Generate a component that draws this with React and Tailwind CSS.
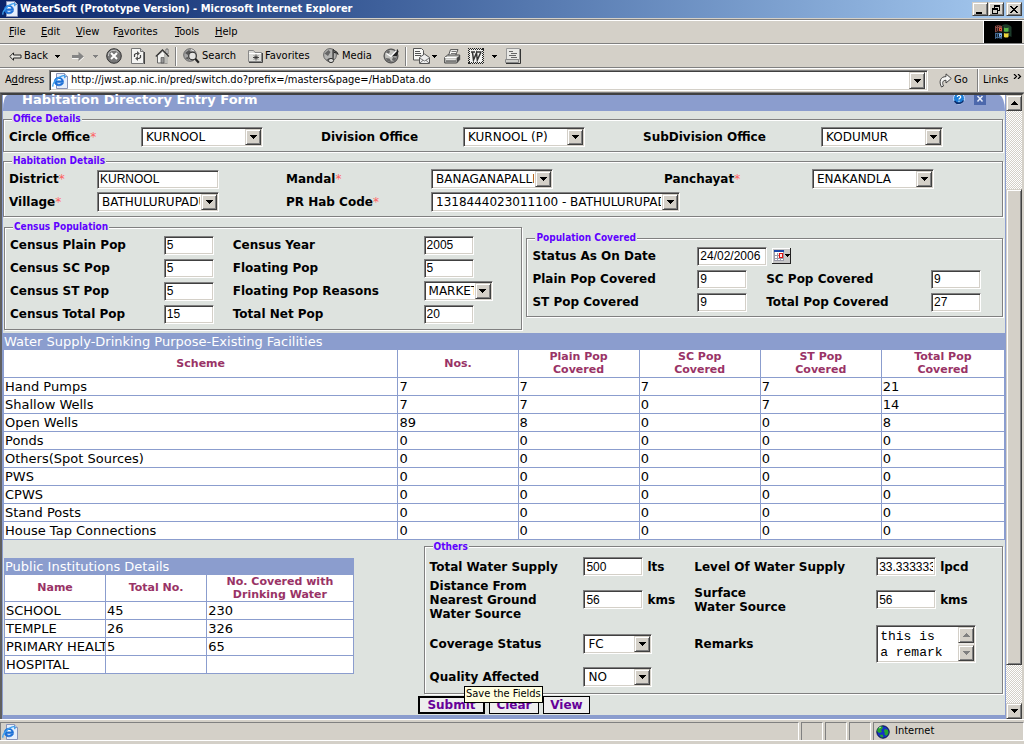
import React from "react";

const SUNKEN =
  "border border-t-[#808080] border-l-[#808080] border-b-white border-r-white shadow-[inset_1px_1px_#404040,inset_-1px_-1px_#d4d0c8] bg-white";
const RAISED =
  "border border-t-[#d4d0c8] border-l-[#d4d0c8] border-b-[#404040] border-r-[#404040] shadow-[inset_1px_1px_#fff,inset_-1px_-1px_#808080] bg-[#d4d0c8]";
const TAHOMA = "font-['DejaVu_Sans_Condensed','DejaVu_Sans',sans-serif]";

function Arrow({ up = false, color = "#000", small = false }) {
  const w = small ? 5 : 7;
  const h = small ? 3 : 4;
  const down = small ? "M0 0h5v1h-1v1h-1v1h-1v-1h-1v-1h-1z" : "M0 0h7v1h-1v1h-1v1h-1v1h-1v-1h-1v-1h-1v-1h-1z";
  return (
    <svg width={w} height={h} viewBox={`0 0 ${w} ${h}`} shapeRendering="crispEdges" aria-hidden="true" className={up ? "rotate-180" : ""}>
      <path d={down} fill={color} />
    </svg>
  );
}

const idOf = (text) => text.toLowerCase().replace(/[^a-z]+/g, "-");

function Label({ text, required = false, lines }) {
  return (
    <label htmlFor={idOf(text)} className="whitespace-nowrap text-xs leading-[14px] font-bold">
      {lines ? lines.map((l) => <span key={l} className="block">{l} </span>) : text}
      {required && <span className="font-normal text-[#ff6060]">*</span>}
    </label>
  );
}

function Text({ name, value, className }) {
  return (
    <input
      id={idOf(name)}
      defaultValue={value}
      className={`h-[19px] pl-[2px] pr-[2px] font-['Liberation_Sans',sans-serif] text-xs outline-none ${SUNKEN} ${className}`}
    />
  );
}

function Select({ name, value, className }) {
  return (
    <div className={`relative h-5 ${className}`}>
      <select
        id={idOf(name)}
        defaultValue={value}
        className={`block h-5 w-full appearance-none pr-[18px] pl-1 text-xs outline-none ${SUNKEN}`}
      >
        <option>{value}</option>
      </select>
      <span className={`pointer-events-none absolute top-[2px] right-[2px] bottom-[2px] flex w-4 items-center justify-center ${RAISED}`}>
        <Arrow />
      </span>
    </div>
  );
}

function Group({ title, className = "", children }) {
  return (
    <fieldset className={`min-w-0 border border-[#808080] px-[5px] pt-px shadow-[1px_1px_#fff,inset_1px_1px_#fff] ${className}`}>
      <legend className={`ml-[3px] bg-[#dee3df] px-[1px] text-[10px] leading-[14px] font-bold text-[#6000ff] ${TAHOMA}`}>{title}</legend>
      {children}
    </fieldset>
  );
}

/* ---------- icons ---------- */

function IEIcon() {
  return (
    <svg width="16" height="16" viewBox="0 0 16 16" aria-hidden="true" className="shrink-0">
      <path d="M4.5.5h8l3 3v12h-11z" fill="#e6eefb" stroke="#8a94b8" />
      <path d="M12.5.5v3h3" fill="#c5d3ea" stroke="#8a94b8" />
      <path d="M11.600 9.400H4.600c.4 2.100 3.600 2.500 4.800.7h2c-1.500 4.200-9.100 3.500-9.100-1.700 0-5.600 9.300-5.700 9.300 1z" fill="#1c6fd6" stroke="#1c6fd6" strokeWidth=".6" />
      <path d="M4.700 7.400h4.700c-.5-1.900-4.200-1.900-4.700 0z" fill="#fff" />
      <path d="M1.300 13.6C-.9 11.5 6.400 3.200 11.500 2.600c1.800-.2 1.900 1 .9 2.600" fill="none" stroke="#3fa0ee" strokeWidth="1.400" />
    </svg>
  );
}

function BackIcon() {
  return (
    <svg width="13" height="9" viewBox="0 0 13 9" aria-hidden="true">
      <path d="M.8 4.500l3.700-3.700v2.200h7.500v3H4.500v2.200z" fill="#e8e6e0" stroke="#222" />
    </svg>
  );
}
function ForwardIcon() {
  return (
    <svg width="14" height="11" viewBox="0 0 14 11" aria-hidden="true">
      <path d="M1 4h6.500V.8l5.300 4.700-5.300 4.700V7H1z" fill="#848484" />
      <path d="M1 7.500h6.500M8 10.500l5-4.500" fill="none" stroke="#fff" strokeWidth=".8" />
    </svg>
  );
}
function StopIcon() {
  return (
    <svg width="16" height="16" viewBox="0 0 16 16" aria-hidden="true">
      <circle cx="8" cy="8" r="7.300" fill="#777" stroke="#333" />
      <path d="M2.500 8a5.500 5.500 0 0 1 10-3.500" fill="none" stroke="#ccc" />
      <path d="M5 5l6 6M11 5l-6 6" stroke="#fff" strokeWidth="2" />
    </svg>
  );
}
function RefreshIcon() {
  return (
    <svg width="14" height="16" viewBox="0 0 14 16" aria-hidden="true">
      <path d="M.5.5h9l3 3v12H.5z" fill="#f4f4f2" stroke="#777" />
      <path d="M9.500.5v3h3" fill="#ccc" stroke="#777" />
      <path d="M3.500 9V6.500L5 5.500h1.500M9.500 7v2.500L8 10.500H6.500" fill="none" stroke="#444" strokeWidth="1.200" />
      <path d="M6 3l2.800 2.500L6 8zM7 8l-2.800 2.500L7 13z" fill="#555" />
      <path d="M13.500 4v12" stroke="#444" />
    </svg>
  );
}
function HomeIcon() {
  return (
    <svg width="16" height="16" viewBox="0 0 16 16" className="shrink-0" aria-hidden="true">
      <path d="M11 1h2v5h-2z" fill="#eee" stroke="#444" strokeWidth=".7" />
      <path d="M2.500 7.500L7.500 3l5 4.500V15h-10z" fill="#f4f4f2" stroke="#666" />
      <path d="M9 4.500l4 4V15H9z" fill="#bdbdb8" />
      <path d="M.8 8.500L7.500 1.800l6.400 6.700" fill="none" stroke="#333" strokeWidth="1.200" />
      <path d="M6 9.500h3V15H6z" fill="#999" stroke="#444" strokeWidth=".6" />
    </svg>
  );
}
function SearchIcon() {
  return (
    <svg width="17" height="16" viewBox="0 0 17 16" aria-hidden="true">
      <circle cx="7" cy="7" r="6.300" fill="#a5a5a5" stroke="#666" />
      <path d="M2 5l4-3 2 2-3 3zM2 10l3-1 1 3" fill="#555" />
      <path d="M8 1.500l3 1.500" stroke="#eee" />
      <circle cx="9.500" cy="8" r="3.800" fill="#e4e4e2" stroke="#333" strokeWidth="1.200" />
      <path d="M12.300 10.800l3.500 4" stroke="#222" strokeWidth="2.200" />
    </svg>
  );
}
function FavoritesIcon() {
  return (
    <svg width="15" height="13" viewBox="0 0 15 13" aria-hidden="true">
      <path d="M.5 11.500V.500h5l1.500 2h6.500v9z" fill="#dededa" stroke="#888" />
      <path d="M1 3.500h12" stroke="#fff" />
      <path d="M14.500 3v9.500H1" fill="none" stroke="#444" />
      <path d="M8 4.500v6M5 7.500h6M6 5.500l4 4M10 5.500l-4 4" stroke="#333" strokeWidth=".9" />
    </svg>
  );
}
function MediaIcon() {
  return (
    <svg width="17" height="16" viewBox="0 0 17 16" aria-hidden="true">
      <circle cx="7" cy="7" r="6.400" fill="#b4b4b2" stroke="#666" />
      <path d="M1.500 5.500l4-3.500 2 2-2.500 4zM3 12l3-2 2 3-3 .5z" fill="#666" />
      <path d="M10 12.500V1.500c1.500 2 5 1.800 5 5 0-1.500-3-2-4-2" fill="#777" stroke="#222" />
      <ellipse cx="8" cy="12.500" rx="2.600" ry="2.100" fill="#d8d8d6" stroke="#333" />
    </svg>
  );
}
function HistoryIcon() {
  return (
    <svg width="17" height="16" viewBox="0 0 17 16" aria-hidden="true">
      <circle cx="8" cy="8" r="7" fill="#888" stroke="#444" />
      <circle cx="7.500" cy="7.500" r="5.500" fill="#c2c2be" />
      <path d="M2.500 10l4 .5 2 3.500-4-1zM10 9l3.500 1-2 3-2.500-1zM3 4l3-2 1 2-2 2z" fill="#666" />
      <path d="M8 8.500L14.500 1l1 2.500L14 8z" fill="#222" />
      <path d="M3.500 5.500L8 8.500l5.500-6" fill="none" stroke="#fff" strokeWidth="1.300" />
    </svg>
  );
}
function MailIcon() {
  return (
    <svg width="17" height="16" viewBox="0 0 17 16" aria-hidden="true">
      <path d="M.5.500h8l2 2v9.500H.5z" fill="#f8f8f6" stroke="#555" />
      <path d="M2 3.500h5M2 5.500h6M2 7.500h6" stroke="#555" />
      <path d="M6.500 15.500V9.500l5-3.500 5 3.500v6z" fill="#eee" stroke="#555" />
      <path d="M6.500 10l5 3 5-3M6.500 15.500l3.500-3.200M16.500 15.500L13 12.300" fill="none" stroke="#777" />
    </svg>
  );
}
function PrintIcon() {
  return (
    <svg width="17" height="15" viewBox="0 0 17 15" aria-hidden="true">
      <path d="M4.500 6.500L6.500.6h7.500l-2.500 6z" fill="#f8f8f6" stroke="#555" />
      <path d="M7.500 2.500h5M7 4.500h5" stroke="#777" />
      <path d="M.7 8.500l3-2.500h12v4.500l-3 3.500H.7z" fill="#c8c8c4" stroke="#444" />
      <path d="M12.700 9l3-2.500v4l-3 3.500z" fill="#444" />
      <path d="M1 8.500h11.500M2 11h9.500" fill="none" stroke="#fff" />
      <path d="M2 12h10" stroke="#333" />
    </svg>
  );
}
function WordIcon() {
  return (
    <svg width="16" height="16" viewBox="0 0 16 16" aria-hidden="true">
      <path d="M1 1h14v14H1z" fill="#f2f2f0" />
      <path d="M0 .5h16M0 15.500h16M.5 0v16M15.500 0v16" stroke="#222" strokeDasharray="1 1" />
      <path d="M0 1.500h16M0 14.500h16M1.500 0v16M14.500 0v16" stroke="#222" strokeDasharray="1 1" strokeDashoffset="1" />
      <path d="M3 4h4M8 4h5.500M4.500 4.500l1 7.500 3-7 .8 7 3.500-7.500" fill="none" stroke="#333" strokeWidth="1.500" />
    </svg>
  );
}
function PageIcon() {
  return (
    <svg width="16" height="16" viewBox="0 0 16 16" aria-hidden="true">
      <path d="M1.500.5h13v11h-13z" fill="#e8e8e5" stroke="#999" />
      <path d="M.5 11.500h13v3H.5z" fill="#d0d0cc" stroke="#888" />
      <path d="M4 3.500h4M6 5.500h6M4 7.500h7M6 9.500h6" stroke="#666" />
      <path d="M15.500 1v14.500H1" fill="none" stroke="#333" />
    </svg>
  );
}
function GoIcon() {
  return (
    <svg width="13" height="15" viewBox="0 0 13 15" aria-hidden="true">
      <path d="M2.500 14C-.5 8.500 1.500 3.600 7 3.600V.9l5.300 4.600L7 10V7.300C3.800 7.200 2.800 9.500 4.500 13z" fill="#f4f4f2" stroke="#444" />
    </svg>
  );
}
function FlagIcon() {
  return (
    <svg width="18" height="16" viewBox="0 0 18 16" aria-hidden="true">
      <path d="M1 2c2-1 5-1 7 0v6C6 7 3 7 1 8.500z" fill="#8a4a44" />
      <path d="M1 9c2-1 5-1 7 0v6c-2-1-5-1-7 0z" fill="#43688f" />
      <path d="M8 1.500C11-.5 15 0 17.500 3v10c-2-1-6-2-8.500 0z" fill="#1d3b2a" />
      <path d="M5 4h3v3H5z" fill="#e05a3c" />
      <path d="M10 3.500c1.500.8 3 .8 4.500 0v4c-1.500.8-3 .8-4.500 0z" fill="#54b045" />
      <path d="M5 9.500h3v3H5z" fill="#7fb2ea" />
      <path d="M10 9c1.500.8 3 .8 4.500 0v4c-1.500.8-3 .8-4.500 0z" fill="#f0d43a" />
      <path d="M9 2v12.500M3 8.300h13" stroke="#101010" />
      <path d="M2.500 2v13M4.500 2v13M0 5.500h7M0 11.500h7" stroke="#000" strokeWidth=".7" strokeDasharray="1 1" />
    </svg>
  );
}
function HelpIcon() {
  return (
    <svg width="12" height="10" viewBox="0 3 12 10" aria-hidden="true">
      <circle cx="6" cy="6.500" r="5.500" fill="#1e7fd8" stroke="#c9defa" />
      <path d="M1.500 9a5.200 5.200 0 0 0 9-.5" fill="none" stroke="#0c2c6c" strokeWidth="1.500" />
      <path d="M4.300 5c0-2 3.400-2 3.400 0 0 1.300-1.700 1.200-1.700 2.500M6 8.700v1" fill="none" stroke="#fff" strokeWidth="1.200" />
    </svg>
  );
}
function CloseIcon() {
  return (
    <svg width="12" height="10" viewBox="0 0 12 10" aria-hidden="true">
      <path d="M0 0h12v10H0z" fill="#4c68ac" />
      <path d="M3.500 1l5 5.500M8.500 1l-5 5.500" stroke="#e6ecfa" strokeWidth="1.500" />
    </svg>
  );
}
function CalendarIcon() {
  return (
    <svg width="19" height="16" viewBox="0 0 19 16" aria-hidden="true" className="block">
      <path d="M0 0h19v16H0z" fill="#c6c6c6" />
      <path d="M0 0h18v1H1v14H0z" fill="#fff" />
      <path d="M18 0h1v16H0v-1h18z" fill="#222" />
      <path d="M2 3h10v10H2z" fill="#fff" />
      <path d="M2 2h10v2H2z" fill="#1a46a8" />
      <path d="M2.500 4v9M5.500 5v8M8.500 5v8M2 7.500h10M2 10.500h10M2 12.500h10M11.500 4v9" stroke="#9a9aa8" fill="none" />
      <path d="M7.500 5.500h3v4h-3z" fill="#fff" stroke="#e01010" strokeWidth="1.200" />
      <path d="M13 6h5v1h-1v1h-1v1h-1v-1h-1v-1h-1z" fill="#000" />
    </svg>
  );
}
function GlobeIcon() {
  return (
    <svg width="14" height="14" viewBox="0 0 14 14" aria-hidden="true">
      <circle cx="7" cy="7" r="6.200" fill="#1530c8" stroke="#0a1440" />
      <path d="M2 3l4-2 1 2-2 2 1 2-3 1-2-2zM9 4l3 1 .5 3-2 3-2-1.500.3-2-1-1.500zM3.500 10l3-.5 1 2.500-2 .5z" fill="#25a52e" />
      <path d="M3 3l2-1" stroke="#b8f0a8" />
    </svg>
  );
}

/* ---------- browser chrome ---------- */

function TitleButton({ label, children }) {
  return (
    <button aria-label={label} className={`flex h-[14px] w-4 items-center justify-center ${RAISED}`}>
      <svg width="10" height="9" viewBox="0 0 10 9" shapeRendering="crispEdges" aria-hidden="true">{children}</svg>
    </button>
  );
}

function TitleBar() {
  return (
    <header className="flex h-[18px] items-center bg-linear-to-r from-[#0a246a] to-[#a6caf0] pr-[2px] pl-[2px]">
      <IEIcon />
      <h1 className={`flex-1 pl-[2px] text-[11px] leading-4 font-bold whitespace-nowrap text-white ${TAHOMA}`}>
        WaterSoft (Prototype Version) - Microsoft Internet Explorer
      </h1>
      <TitleButton label="Minimize"><path d="M1 7h6v2H1z" /></TitleButton>
      <TitleButton label="Restore">
        <path d="M3 0h6v6H7V5h1V2H4v1H3zM1 3h6v6H1zM2 5v3h4V5z" fillRule="evenodd" />
      </TitleButton>
      <span className="w-[2px]" />
      <TitleButton label="Close">
        <path d="M1 1h2v1h1v1h2V2h1V1h2v1H8v1H7v1H6v1h1v1h1v1h1v1H7V7H6V6H4v1H3v1H1V7h1V6h1V5h1V4H3V3H2V2H1z" />
      </TitleButton>
    </header>
  );
}

const MENUS = [
  ["", "F", "ile", "w-8"],
  ["", "E", "dit", "w-[35px]"],
  ["", "V", "iew", "w-[37px]"],
  ["F", "a", "vorites", "w-[62px]"],
  ["", "T", "ools", "w-10"],
  ["", "H", "elp", "w-8"],
];

function Separator() {
  return <span className="mx-1 h-[19px] w-[2px] border-l border-l-[#808080] bg-white" />;
}

function Tool({ icon, label, text = "", className = "" }) {
  return (
    <button aria-label={label} className={`flex items-center gap-[2px] whitespace-nowrap ${className}`}>
      {icon}
      {text}
    </button>
  );
}

function BrowserBars() {
  return (
    <div className={`border-t border-t-[#808080] text-[11px] ${TAHOMA}`}>
      <div className="flex h-6 border-b border-b-[#808080] border-t border-t-white">
        <nav className="flex flex-1 items-center pl-[9px]">
          {MENUS.map(([pre, key, post, w]) => (
            <button key={pre + key + post} className={`text-left ${w}`}>
              {pre}<span className="underline">{key}</span>{post}
            </button>
          ))}
        </nav>
        <div className="flex w-[39px] items-center justify-center border-l border-l-white bg-black"><FlagIcon /></div>
        <span className="w-[2px]" />
      </div>
      <div className="flex h-6 items-center border-t border-b border-t-white border-b-[#808080] pl-[9px]">
        <Tool label="Back" icon={<BackIcon />} text="Back" className="w-[46px]" />
        <Tool label="Back history" icon={<Arrow small />} className="w-4" />
        <Tool label="Forward" icon={<ForwardIcon />} className="w-[22px]" />
        <Tool label="Forward history" icon={<Arrow small color="#808080" />} className="w-[13px]" />
        <Tool label="Stop" icon={<StopIcon />} className="w-[25px]" />
        <Tool label="Refresh" icon={<RefreshIcon />} className="w-6" />
        <Tool label="Home" icon={<HomeIcon />} className="w-4" />
        <Separator />
        <Tool label="Search" icon={<SearchIcon />} text="Search" className="ml-[2px] w-[65px]" />
        <Tool label="Favorites" icon={<FavoritesIcon />} text="Favorites" className="w-[75px]" />
        <Tool label="Media" icon={<MediaIcon />} text="Media" className="w-[60px]" />
        <Tool label="History" icon={<HistoryIcon />} className="w-[18px]" />
        <Separator />
        <Tool label="Mail" icon={<><MailIcon /><Arrow small /></>} className="ml-[2px] w-[31px]" />
        <Tool label="Print" icon={<PrintIcon />} className="w-6" />
        <Tool label="Edit with Word" icon={<WordIcon />} className="w-6" />
        <Tool label="Edit options" icon={<Arrow small />} className="w-[13px]" />
        <Tool label="Discuss" icon={<PageIcon />} />
      </div>
      <div className="flex h-[25px] items-center border-t border-b border-t-white border-b-[#808080] pl-[5px]">
        <label htmlFor="address" className="w-11">A<span className="underline">d</span>dress</label>
        <div className={`flex h-[21px] flex-1 items-center gap-[3px] pr-[2px] pl-[2px] ${SUNKEN}`}>
          <IEIcon />
          <input
            id="address"
            className="min-w-0 flex-1 outline-none"
            defaultValue="http://jwst.ap.nic.in/pred/switch.do?prefix=/masters&page=/HabData.do"
          />
          <button aria-label="Show addresses" className={`flex h-[17px] w-4 items-center justify-center ${RAISED}`}><Arrow /></button>
        </div>
        <button className="flex h-full w-[50px] items-center gap-[2px] border-r border-r-[#808080] pl-[11px]"><GoIcon />Go</button>
        <button className="flex h-full w-[46px] items-center gap-[5px] border-l border-l-white pl-1">
          Links
          <svg width="9" height="5" viewBox="0 0 9 5" className="mb-2" aria-hidden="true">
            <path d="M1 0l2.500 2.500L1 5M5 0l2.500 2.500L5 5" fill="none" stroke="#000" strokeWidth="1.200" />
          </svg>
        </button>
      </div>
    </div>
  );
}

function ScrollBar() {
  return (
    <div
      className="flex w-4 shrink-0 flex-col bg-[conic-gradient(#fff_25%,#d4d0c8_0_50%,#fff_0_75%,#d4d0c8_0)] bg-[length:2px_2px]"
    >
      <button aria-label="Scroll up" className={`flex h-4 items-center justify-center ${RAISED}`}><Arrow up /></button>
      <span className="grow-[78]" />
      <span className={`grow-[475] ${RAISED}`} />
      <span className="grow-[38]" />
      <button aria-label="Scroll down" className={`flex h-4 items-center justify-center ${RAISED}`}><Arrow /></button>
    </div>
  );
}

function StatusBar() {
  const cell = "border-t border-l border-r border-t-[#808080] border-l-[#808080] border-r-white";
  return (
    <footer className={`border-t border-t-white pt-[2px] text-[11px] ${TAHOMA}`}>
      <div className="flex h-[19px] gap-[2px] border-b border-b-white">
        <div className={`flex flex-1 items-center pl-px ${cell}`}><IEIcon /></div>
        <div className={`w-[22px] ${cell}`} />
        <div className={`w-[22px] ${cell}`} />
        <div className={`w-[22px] ${cell}`} />
        <div className={`flex w-[151px] items-center gap-[5px] pl-[2px] ${cell}`}><GlobeIcon />Internet</div>
      </div>
      <div className="h-[3px]" />
    </footer>
  );
}

/* ---------- form ---------- */

const FACILITIES = [
  ["Hand Pumps", 7, 7, 7, 7, 21],
  ["Shallow Wells", 7, 7, 0, 7, 14],
  ["Open Wells", 89, 8, 0, 0, 8],
  ["Ponds", 0, 0, 0, 0, 0],
  ["Others(Spot Sources)", 0, 0, 0, 0, 0],
  ["PWS", 0, 0, 0, 0, 0],
  ["CPWS", 0, 0, 0, 0, 0],
  ["Stand Posts", 0, 0, 0, 0, 0],
  ["House Tap Connections", 0, 0, 0, 0, 0],
];

const INSTITUTIONS = [
  ["SCHOOL", "45", "230"],
  ["TEMPLE", "26", "326"],
  ["PRIMARY HEALTH", "5", "65"],
  ["HOSPITAL", "", ""],
];

function DataTable({ title, heads, widths, rows, className = "" }) {
  return (
    <table className={`table-fixed border-collapse bg-white text-xs ${className}`}>
      <caption className="h-[17px] bg-[#8b9dce] pl-px text-left text-[13px] leading-[17px] whitespace-nowrap text-white">{title}</caption>
      <colgroup>{widths.map((w, i) => <col key={i} className={w} />)}</colgroup>
      <thead>
        <tr className="h-[27px]">
          {heads.map((h) => (
            <th key={h.join(" ")} scope="col" className="border border-t-0 border-[#8b9dce] p-0 text-[11px] leading-[13px] font-bold text-[#993366]">
              {h.map((l) => <span key={l} className="block whitespace-nowrap">{l}</span>)}
            </th>
          ))}
        </tr>
      </thead>
      <tbody>
        {rows.map((row) => (
          <tr key={row[0]} className="h-[18px]">
            {row.map((cell, i) => (
              <td key={i} className="overflow-hidden border border-[#8b9dce] p-0 pl-px text-[13px] leading-[17px] whitespace-nowrap">{cell}</td>
            ))}
          </tr>
        ))}
      </tbody>
    </table>
  );
}

function Remarks() {
  return (
    <div className={`flex h-[38px] w-[100px] p-px ${SUNKEN}`}>
      <textarea
        id="remarks"
        defaultValue={"this is\na remark"}
        className="min-w-0 flex-1 resize-none overflow-hidden pt-[2px] pl-[2px] font-['Liberation_Mono',monospace] text-[13px] leading-4 outline-none"
      />
      <span className="flex w-4 flex-col justify-between bg-[#ebe8e4]">
        <button type="button" aria-label="Scroll remarks up" className={`flex h-4 items-center justify-center ${RAISED}`}><Arrow up color="#808080" /></button>
        <button type="button" aria-label="Scroll remarks down" className={`flex h-4 items-center justify-center ${RAISED}`}><Arrow color="#808080" /></button>
      </span>
    </div>
  );
}

function Measure({ name, value, unit }) {
  return (
    <div className="flex items-center gap-1">
      <Text name={name} value={value} className="w-[60px]" />
      <span className="text-xs leading-[14px] font-bold">{unit}</span>
    </div>
  );
}

function EntryForm() {
  const button = "h-[18px] border-black bg-[#eee] text-xs leading-[14px] font-bold text-[#660099]";
  return (
    <form className="flex min-w-0 flex-1 flex-col border-x border-b-4 border-[#8b9dce] bg-[#dee3df]" onSubmit={(e) => e.preventDefault()}>
      <div className="bg-white">
        <div className="flex h-4 items-start justify-between rounded-tl-[5px_14px] rounded-tr-[6px_16px] bg-[#8b9dce] pr-[19px] pl-[19px]">
          <h2 className="text-[13px] leading-[10px] font-bold text-white">Habitation Directory Entry Form</h2>
          <div className="flex gap-[9px]">
            <button type="button" aria-label="Help"><HelpIcon /></button>
            <button type="button" aria-label="Close form"><CloseIcon /></button>
          </div>
        </div>
      </div>

      <div className="flex flex-col gap-[2px] pt-px pr-[2px]">
        <Group title="Office Details" className="pb-1">
          <div className="grid grid-cols-[132fr_180fr_142fr_180fr_178fr_176fr] items-center">
            <Label text="Circle Office" required />
            <Select name="Circle Office" value="KURNOOL" className="w-[122px]" />
            <Label text="Division Office" />
            <Select name="Division Office" value="KURNOOL (P)" className="w-[122px]" />
            <Label text="SubDivision Office" />
            <Select name="SubDivision Office" value="KODUMUR" className="w-[122px]" />
          </div>
        </Group>
        <Group title="Habitation Details" className="pb-1">
          <div className="grid grid-cols-[88fr_189fr_145fr_233fr_148fr_185fr] items-center gap-y-[3px]">
            <Label text="District" required />
            <Text name="District" value="KURNOOL" className="w-[122px]" />
            <Label text="Mandal" required />
            <Select name="Mandal" value="BANAGANAPALLE" className="w-[122px]" />
            <Label text="Panchayat" required />
            <Select name="Panchayat" value="ENAKANDLA" className="w-[122px]" />
            <Label text="Village" required />
            <Select name="Village" value="BATHULURUPADU" className="w-[122px]" />
            <Label text="PR Hab Code" required />
            <Select name="PR Hab Code" value="1318444023011100 - BATHULURUPADU" className="col-span-3 w-[249px]" />
          </div>
        </Group>
      </div>

      <div className="flex items-start gap-1 pt-[3px] pr-[2px] pb-[3px] pl-px">
        <Group title="Census Population" className="flex-[520] pb-[5px]">
          <div className="grid auto-rows-[20px] grid-cols-[154fr_69fr_191fr_93fr] items-center gap-y-[3px]">
            <Label text="Census Plain Pop" />
            <Text name="Census Plain Pop" value="5" className="w-[50px]" />
            <Label text="Census Year" />
            <Text name="Census Year" value="2005" className="w-[50px]" />
            <Label text="Census SC Pop" />
            <Text name="Census SC Pop" value="5" className="w-[50px]" />
            <Label text="Floating Pop" />
            <Text name="Floating Pop" value="5" className="w-[50px]" />
            <Label text="Census ST Pop" />
            <Text name="Census ST Pop" value="5" className="w-[50px]" />
            <Label text="Floating Pop Reasons" />
            <Select name="Floating Pop Reasons" value="MARKETS" className="w-[69px]" />
            <Label text="Census Total Pop" />
            <Text name="Census Total Pop" value="15" className="w-[50px]" />
            <Label text="Total Net Pop" />
            <Text name="Total Net Pop" value="20" className="w-[50px]" />
          </div>
        </Group>
        <Group title="Population Covered" className="mt-[11px] flex-[477] pb-1">
          <div className="grid auto-rows-[20px] grid-cols-[165fr_69fr_165fr_66fr] items-center gap-y-[3px]">
            <Label text="Status As On Date" />
            <div className="col-span-3 flex items-center gap-[5px]">
              <Text name="Status As On Date" value="24/02/2006" className="w-[70px]" />
              <button type="button" aria-label="Pick a date"><CalendarIcon /></button>
            </div>
            <Label text="Plain Pop Covered" />
            <Text name="Plain Pop Covered" value="9" className="w-[50px]" />
            <Label text="SC Pop Covered" />
            <Text name="SC Pop Covered" value="9" className="w-[50px]" />
            <Label text="ST Pop Covered" />
            <Text name="ST Pop Covered" value="9" className="w-[50px]" />
            <Label text="Total Pop Covered" />
            <Text name="Total Pop Covered" value="27" className="w-[50px]" />
          </div>
        </Group>
      </div>

      <DataTable
        title="Water Supply-Drinking Purpose-Existing Facilities"
        heads={[["Scheme"], ["Nos."], ["Plain Pop", "Covered"], ["SC Pop", "Covered"], ["ST Pop", "Covered"], ["Total Pop", "Covered"]]}
        widths={["w-[39.4%]", "w-[12%]", "w-[12.1%]", "w-[12.1%]", "w-[12.1%]", "w-[12.3%]"]}
        rows={FACILITIES}
        className="w-full"
      />

      <div className="flex items-start justify-between pr-[2px] pl-px">
        <DataTable
          title="Public Institutions Details"
          heads={[["Name"], ["Total No."], ["No. Covered with", "Drinking Water"]]}
          widths={["w-[29%]", "w-[29%]", "w-[42%]"]}
          rows={INSTITUTIONS}
          className="mt-[18px] w-[35%]"
        />
        <Group title="Others" className="w-[58%] pb-[6px]">
          <div className="grid grid-cols-[154fr_111fr_182fr_121fr] grid-rows-[24px_42px_46px_20px] items-center">
            <Label text="Total Water Supply" />
            <Measure name="Total Water Supply" value="500" unit="lts" />
            <Label text="Level Of Water Supply" />
            <Measure name="Level Of Water Supply" value="33.333333333" unit="lpcd" />
            <Label text="Distance From Nearest Ground Water Source" lines={["Distance From", "Nearest Ground", "Water Source"]} />
            <Measure name="Distance From Nearest Ground Water Source" value="56" unit="kms" />
            <Label text="Surface Water Source" lines={["Surface", "Water Source"]} />
            <Measure name="Surface Water Source" value="56" unit="kms" />
            <Label text="Coverage Status" />
            <Select name="Coverage Status" value="FC" className="w-[69px]" />
            <Label text="Remarks" />
            <Remarks />
            <Label text="Quality Affected" />
            <Select name="Quality Affected" value="NO" className="w-[69px]" />
          </div>
        </Group>
      </div>

      <div className="flex justify-center gap-1 pt-[2px]">
        <div className="relative flex">
          <button type="submit" aria-describedby="submit-tip" className={`w-[67px] border-2 ${button}`}>Submit</button>
          <span
            id="submit-tip"
            role="tooltip"
            className={`absolute -top-[10px] left-[46px] z-10 flex h-[17px] items-center border border-black bg-[#ffffe1] px-px text-[11px] whitespace-nowrap ${TAHOMA}`}
          >
            Save the Fields
          </span>
        </div>
        <button type="reset" className={`w-[50px] border ${button}`}>Clear</button>
        <button type="button" className={`w-[47px] border ${button}`}>View</button>
      </div>
    </form>
  );
}

export default function App() {
  return (
    <div className="flex min-h-screen flex-col bg-[#d4d0c8] font-['DejaVu_Sans',sans-serif] text-black">
      <TitleBar />
      <div className="h-px" />
      <BrowserBars />
      <main className="flex flex-1 border-t-2 border-r-2 border-l-2 border-t-[#404040] border-r-[#d4d0c8] border-l-[#606060]">
        <EntryForm />
        <ScrollBar />
      </main>
      <StatusBar />
    </div>
  );
}
